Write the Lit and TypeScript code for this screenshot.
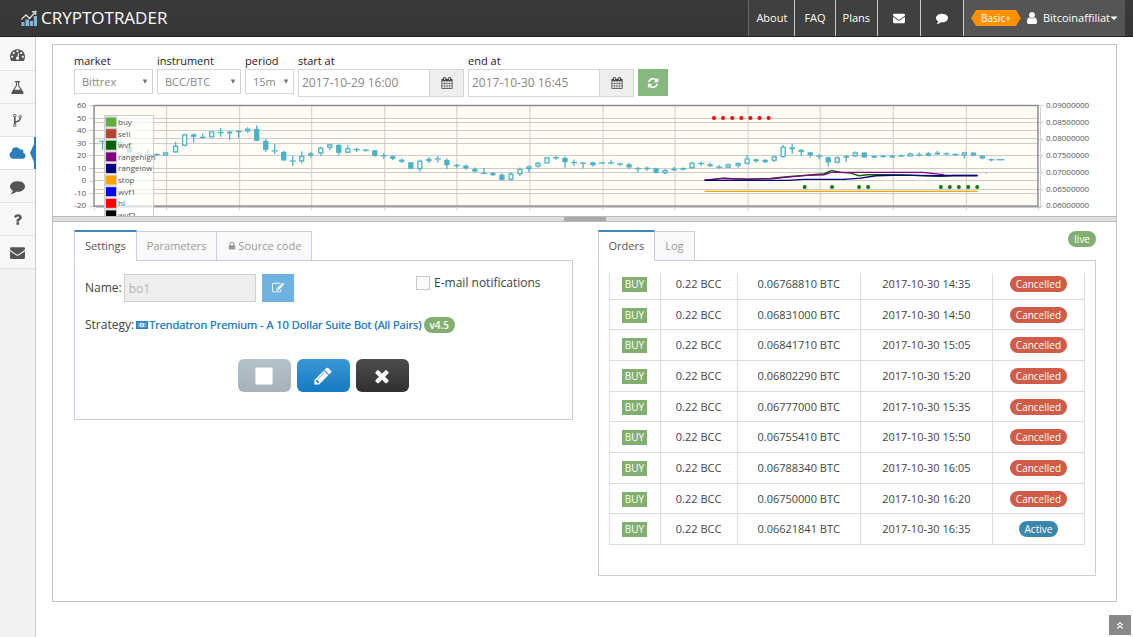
import { LitElement, html, css, svg } from "lit";
import { customElement, property } from "lit/decorators.js";

const GLYPHS: Record<string, string> = {
  envelope: "M1792 710v794q0 66-47 113t-113 47h-1472q-66 0-113-47t-47-113v-794q44 49 101 87 362 246 497 345 57 42 92.500 65.500t94.500 48 110 24.500h2q51 0 110-24.500t94.500-48 92.500-65.500q170-123 498-345 57-39 100-87zm0-294q0 79-49 151t-122 123q-376 261-468 325-10 7-42.500 31t-54 38-52 32.500-57.500 27-50 9h-2q-23 0-50-9t-57.500-27-52-32.500-54-38-42.500-31q-91-64-262-182.500t-205-142.500q-62-42-117-115.500t-55-136.500q0-78 41.500-130t118.500-52h1472q65 0 112.500 47t47.500 113z",
  comment: "M1792 896q0 174-120 321.500t-326 233-450 85.500q-70 0-145-8-198 175-460 242-49 14-114 22-17 2-30.500-9t-17.500-29v-1q-3-4-.5-12t2-10 4.500-9.500l6-9 7-8.500 8-9q7-8 31-34.500t34.500-38 31-39.500 32.500-51 27-59 26-76q-157-89-247.500-220t-90.500-281q0-130 71-248.500t191-204.500 286-136.500 348-50.500q244 0 450 85.500t326 233 120 321.500z",
  cloud: "M1984 1152q0 159-112.500 271.500t-271.500 112.500h-1088q-185 0-316.500-131.500t-131.500-316.500q0-132 71-241.500t187-163.500q-2-28-2-43 0-212 150-362t362-150q158 0 286.500 88t187.500 230q70-62 166-62 106 0 181 75t75 181q0 75-41 138 129 30 213 134.500t84 239.500z",
  dashboard: "M384 1152q0-53-37.500-90.500t-90.500-37.500-90.500 37.500-37.500 90.500 37.500 90.500 90.500 37.500 90.500-37.500 37.500-90.500zm192-448q0-53-37.500-90.500t-90.500-37.500-90.500 37.500-37.500 90.500 37.500 90.500 90.500 37.500 90.500-37.500 37.500-90.500zm428 481l101-382q6-26-7.500-48.500t-38.500-29.500-48 6.500-30 39.500l-101 382q-60 5-107 43.500t-63 98.500q-20 77 20 146t117 89 146-20 89-117q16-60-6-117t-72-91zm660-33q0-53-37.500-90.500t-90.500-37.500-90.500 37.500-37.500 90.500 37.500 90.500 90.500 37.500 90.500-37.500 37.500-90.500zm-640-640q0-53-37.500-90.500t-90.500-37.500-90.500 37.500-37.500 90.500 37.500 90.500 90.500 37.500 90.500-37.500 37.500-90.500zm448 192q0-53-37.500-90.500t-90.500-37.500-90.500 37.500-37.500 90.500 37.500 90.500 90.500 37.500 90.500-37.500 37.500-90.500zm320 448q0 261-141 483-19 29-54 29h-1402q-35 0-54-29-141-221-141-483 0-182 71-348t191-286 286-191 348-71 348 71 286 191 191 286 71 348z",
  flask: "M1591 1448q56 89 21.500 152.500t-140.500 63.500h-1152q-106 0-140.500-63.500t21.500-152.500l503-793v-399h-64q-26 0-45-19t-19-45 19-45 45-19h512q26 0 45 19t19 45-19 45-45 19h-64v399zm-779-725l-272 429h712l-272-429-20-31v-436h-128v436z",
  fork: "M672 1472q0-40-28-68t-68-28-68 28-28 68 28 68 68 28 68-28 28-68zm0-1152q0-40-28-68t-68-28-68 28-28 68 28 68 68 28 68-28 28-68zm640 128q0-40-28-68t-68-28-68 28-28 68 28 68 68 28 68-28 28-68zm96 0q0 52-26 96.500t-70 69.500q-2 287-226 414-67 38-203 81-128 40-169.500 71t-41.500 100v26q44 25 70 69.500t26 96.500q0 80-56 136t-136 56-136-56-56-136q0-52 26-96.500t70-69.500v-820q-44-25-70-69.500t-26-96.500q0-80 56-136t136-56 136 56 56 136q0 52-26 96.500t-70 69.500v497q54-26 154-57 55-17 87.500-29.500t70.500-31 59-39.500 40.500-51 28-69.500 8.500-91.500q-44-25-70-69.500t-26-96.500q0-80 56-136t136-56 136 56 56 136z",
  question: "M1088 1256v240q0 16-12 28t-28 12h-240q-16 0-28-12t-12-28v-240q0-16 12-28t28-12h240q16 0 28 12t12 28zm316-600q0 54-15.500 101t-35 76.500-55 59.500-57.500 43.500-61 35.500q-41 23-68.500 65t-27.500 67q0 17-12 32.500t-28 15.500h-240q-15 0-25.500-18.500t-10.500-37.500v-45q0-83 65-156.500t143-108.500q59-27 84-56t25-76q0-42-46.500-74t-107.500-32q-65 0-108 29-35 25-107 115-13 16-31 16-12 0-25-8l-164-125q-13-10-15.500-25t5.500-28q160-266 464-266 80 0 161 31t146 83 106 127.500 41 158.500z",
  user: "M1536 1399q0 109-62.500 187t-150.500 78h-854q-88 0-150.500-78t-62.500-187q0-85 8.500-160.500t31.500-152 58.500-131 94-89 134.500-34.500q131 128 313 128t313-128q76 0 134.500 34.500t94 89 58.500 131 31.500 152 8.500 160.500zm-256-887q0 159-112.500 271.500t-271.500 112.500-271.500-112.500-112.500-271.500 112.500-271.500 271.500-112.500 271.500 112.500 112.500 271.500z",
  calendar: "M192 1664h288v-288h-288v288zm352 0h320v-288h-320v288zm-352-352h288v-320h-288v320zm352 0h320v-320h-320v320zm-352-384h288v-288h-288v288zm736 736h320v-288h-320v288zm-384-736h320v-288h-320v288zm768 736h288v-288h-288v288zm-384-352h320v-320h-320v320zm-352-864v-288q0-13-9.500-22.500t-22.500-9.500h-64q-13 0-22.500 9.500t-9.500 22.500v288q0 13 9.500 22.500t22.500 9.500h64q13 0 22.500-9.500t9.500-22.500zm736 864h288v-320h-288v320zm-384-384h320v-288h-320v288zm384 0h288v-288h-288v288zm32-480v-288q0-13-9.500-22.500t-22.500-9.500h-64q-13 0-22.500 9.500t-9.500 22.500v288q0 13 9.500 22.500t22.500 9.500h64q13 0 22.500-9.500t9.500-22.500zm384-64v1280q0 52-38 90t-90 38h-1408q-52 0-90-38t-38-90v-1280q0-52 38-90t90-38h128v-96q0-66 47-113t113-47h64q66 0 113 47t47 113v96h384v-96q0-66 47-113t113-47h64q66 0 113 47t47 113v96h128q52 0 90 38t38 90z",
  refresh: "M1639 1056q0 5-1 7-64 268-268 434.500t-478 166.500q-146 0-282.500-55t-243.500-157l-129 129q-19 19-45 19t-45-19-19-45v-448q0-26 19-45t45-19h448q26 0 45 19t19 45-19 45l-137 137q71 66 161 102t187 36q134 0 250-65t186-179q11-17 53-117 8-23 30-23h192q13 0 22.500 9.500t9.500 22.500zm25-800v448q0 26-19 45t-45 19h-448q-26 0-45-19t-19-45 19-45l138-138q-148-137-349-137-134 0-250 65t-186 179q-11 17-53 117-8 23-30 23h-199q-13 0-22.500-9.500t-9.500-22.500v-7q65-268 270-434.500t480-166.500q146 0 284 55.500t245 156.500l130-129q19-19 45-19t45 19 19 45z",
  lock: "M640 768h512v-192q0-106-75-181t-181-75-181 75-75 181v192zm832 96v576q0 40-28 68t-68 28h-960q-40 0-68-28t-28-68v-576q0-40 28-68t68-28h32v-192q0-184 132-316t316-132 316 132 132 316v192h32q40 0 68 28t28 68z",
  edit: "M888 1184l116-116-152-152-116 116v56h96v96h56zm440-720q-16-16-33 1l-350 350q-17 17-1 33t33-1l350-350q17-17 1-33zm80 594v190q0 119-84.500 203.500t-203.500 84.500h-832q-119 0-203.500-84.500t-84.500-203.500v-832q0-119 84.500-203.500t203.500-84.500h832q63 0 117 25 15 7 18 23 3 17-9 29l-49 49q-14 14-32 8-23-6-45-6h-832q-66 0-113 47t-47 113v832q0 66 47 113t113 47h832q66 0 113-47t47-113v-126q0-13 9-22l64-64q15-15 35-7t20 29zm-96-738l288 288-672 672h-288v-288zm444 132l-92 92-288-288 92-92q28-28 68-28t68 28l152 152q28 28 28 68t-28 68z",
  pencil: "M491 1536l91-91-235-235-91 91v107h128v128h107zm523-928q0-22-22-22-10 0-17 7l-542 542q-7 7-7 17 0 22 22 22 10 0 17-7l542-542q7-7 7-17zm-54-192l416 416-832 832h-416v-416zm683 96q0 53-37 90l-166 166-416-416 166-165q36-38 90-38 53 0 91 38l235 234q37 39 37 91z",
  times: "M1490 1322q0 40-28 68l-136 136q-28 28-68 28t-68-28l-294-294-294 294q-28 28-68 28t-68-28l-136-136q-28-28-28-68t28-68l294-294-294-294q-28-28-28-68t28-68l136-136q28-28 68-28t68 28l294 294 294-294q28-28 68-28t68 28l136 136q28 28 28 68t-28 68l-294 294 294 294q28 28 28 68z",
  stop: "M1664 192v1408q0 26-19 45t-45 19h-1408q-26 0-45-19t-19-45v-1408q0-26 19-45t45-19h1408q26 0 45 19t19 45z",
  up: "M330 900l566-560 566 560-150 150-416-416-416 416zM330 1460l566-560 566 560-150 150-416-416-416 416z",
  caret: "M100 560h1592l-796 860z",
  down: "M200 300h1392l-696 1250z",
};

@customElement("glyph-icon")
class GlyphIcon extends LitElement {
  @property() name = "";
  static styles = css`
    :host { display: inline-flex; width: 14px; height: 14px; flex: none; }
    svg { display: block; width: 100%; height: 100%; fill: currentColor; }
  `;
  render() {
    const box = this.name === "cloud" ? "0 0 2048 1792" : "0 0 1792 1792";
    return html`<svg viewBox=${box} aria-hidden="true"><path d=${GLYPHS[this.name] ?? ""}></path></svg>`;
  }
}

/* Each candle: body top, body bottom, high, low, kind (1 filled, 0 hollow), in thirds of a unit. */
type Candle = [number, number, number, number, number];
const CANDLES: Candle[] = [
  [137,140,137,165,1],[150,153,142,160,1],[141,149,133,156,0],[157,172,150,172,1],[175,178,170,182,1],[177,180,163,183,1],
  [177,180,175,182,1],[172,181,170,182,0],[152,172,140,174,0],[118,152,116,154,0],[118,125,115,143,1],[126,128,116,131,1],
  [109,127,109,127,0],[111,114,99,125,1],[110,115,108,135,1],[108,111,105,130,1],[101,109,97,114,0],[102,137,91,139,1],
  [138,164,131,171,1],[166,169,145,177,1],[171,196,167,197,1],[197,199,182,212,1],[183,199,169,205,0],[175,181,170,188,0],
  [158,175,155,182,0],[148,158,146,165,0],[150,173,145,181,1],[160,173,151,173,0],[162,165,158,171,1],[164,167,162,170,1],
  [166,182,165,185,1],[181,184,174,192,1],[184,191,181,195,1],[194,200,190,204,1],[202,221,201,221,1],[197,222,193,229,0],
  [192,198,186,204,1],[190,193,183,202,1],[195,210,190,222,1],[210,213,207,218,1],[212,219,208,224,1],[222,229,217,234,1],
  [234,235,219,237,1],[234,240,231,243,1],[239,254,235,256,1],[236,254,231,257,0],[222,237,217,243,0],[214,222,211,232,0],
  [203,214,200,218,0],[187,205,187,205,0],[187,189,182,194,1],[189,201,185,218,1],[201,204,193,212,1],[203,206,201,220,1],
  [202,210,200,214,1],[203,205,202,206,1],[202,205,194,208,1],[206,208,203,213,1],[208,217,204,222,1],[219,222,216,232,1],
  [218,222,214,227,1],[220,233,218,235,1],[225,234,222,238,0],[221,225,216,228,1],[219,223,217,226,1],[203,219,200,221,0],
  [204,207,200,212,1],[208,213,203,216,1],[215,218,210,221,1],[208,218,205,220,0],[204,212,202,218,0],[190,206,180,208,0],
  [193,198,190,203,1],[195,201,192,204,1],[184,197,181,201,0],[155,186,150,187,0],[157,162,146,176,1],[165,170,162,182,1],
  [172,181,170,187,1],[182,185,177,193,1],[187,202,184,214,1],[187,203,184,205,0],[183,187,180,200,1],[172,184,169,186,0],
  [173,187,171,189,1],[183,187,181,189,1],[183,185,180,188,1],[182,187,179,189,1],[182,184,178,186,1],[175,184,172,186,0],
  [178,181,172,184,1],[175,182,170,184,0],[173,178,168,180,1],[175,177,172,182,1],[177,180,175,183,1],[172,181,170,190,0],
  [173,181,170,184,1],[182,190,180,193,1],[193,195,190,199,1],[193,195,193,195,1],
];
const SERIES = [
  ["orange", "12,289 830,289"],
  ["#006400", "12,255 68,249 95,251 140,252 210,250 260,245 320,240 370,236 393,226 420,232 450,234 475,242 500,239 560,239 640,241 720,244 760,241 830,241"],
  ["purple", "12,255 40,253 68,250 140,252 210,251 260,246 320,241 370,239 393,231 430,232 665,232 720,238 735,241 830,241"],
  ["navy", "12,256 260,256 310,253 430,253 480,249 525,242 600,240 700,242 830,242"],
];
const LEGEND = [["buy","#62ac45"],["sell","#b64435"],["wvf","#006400"],["rangehigh","purple"],["rangelow","navy"],["stop","orange"],["wvf1","blue"],["hi","red"],["wvf2","black"]];

@customElement("price-chart")
class PriceChart extends LitElement {
  static styles = css`
    :host { display: block; }
    svg { display: block; width: 100%; height: auto; }
    text { font-family: "Open Sans", sans-serif; font-size: 8px; fill: #545454; }
    .grid { stroke: #ccc; stroke-width: 1; }
    .candle { stroke: #4bb2c5; stroke-width: 1.3; }
  `;
  render() {
    const gx = [166, 239, 311, 384, 456, 529, 602, 674, 747, 819, 892, 965];
    const left = [60, 50, 40, 30, 20, 10, 0, -10, -20];
    const right = ["0.09000000", "0.08500000", "0.08000000", "0.07500000", "0.07000000", "0.06500000", "0.06000000"];
    return html`<svg viewBox="53 98 1062 118" role="img" aria-label="BCC/BTC price chart">
      <rect x="94" y="105" width="943" height="101" fill="#fffdf6"></rect>
      ${left.slice(1, -1).map((_, i) => svg`<line class="grid" x1="94" x2="1037" y1=${Math.round(117.5 + i * 12.55) + 0.5} y2=${Math.round(117.5 + i * 12.55) + 0.5}></line>`)}
      ${right.slice(1, -1).map((_, i) => svg`<line class="grid" x1="94" x2="1037" y1=${Math.round(121.700 + i * 16.75) + 0.5} y2=${Math.round(121.700 + i * 16.75) + 0.5}></line>`)}
      ${gx.map((x) => svg`<line class="grid" x1=${x + 0.5} x2=${x + 0.5} y1="106" y2="210"></line>`)}
      ${left.map((v, i) => svg`<line class="grid" x1="89" x2="94" y1=${Math.round(105 + i * 12.6) + 0.5} y2=${Math.round(105 + i * 12.6) + 0.5}></line>
        <text x="86" y=${108 + i * 12.5} text-anchor="end">${v}</text>`)}
      ${right.map((v, i) => svg`<line class="grid" x1="1037" x2="1042" y1=${Math.round(105 + i * 16.75) + 0.5} y2=${Math.round(105 + i * 16.75) + 0.5}></line>
        <text x="1045" y=${108 + i * 16.7}>${v}</text>`)}
      <path d="M1039.500 107V207.500H96M94.500 206V210M1037.500 206V210" fill="none" stroke="#ccc"></path>
      <rect x="94" y="105.500" width="943" height="100.500" fill="none" stroke="#8c8c8c" stroke-width="1.500"></rect>
      ${CANDLES.map(([t, b, h, l, f], i) => {
        const x = Math.round(102 + i * 9.065) + 0.5;
        const y = 95 + t / 3;
        const bh = (b - t) / 3;
        const w = i === CANDLES.length - 1 ? 8 : 6;
        const slim = bh < 1.2;
        return svg`<g class="candle">
          <line x1=${x} x2=${x} y1=${95 + h / 3} y2=${y}></line>
          <line x1=${x} x2=${x} y1=${y + bh} y2=${95 + l / 3}></line>
          ${slim
            ? svg`<line x1=${x - w / 2} x2=${x + w / 2} y1=${y + bh / 2} y2=${y + bh / 2}></line>`
            : svg`<rect x=${x - 2} y=${y + 0.5} width="4" height=${Math.max(bh - 1, 0.5)} fill=${f ? "#4bb2c5" : "#fffdf6"}></rect>`}
        </g>`;
      })}
      <g transform="translate(700 95) scale(0.333333)">
        ${SERIES.map(([c, pts]) => svg`<polyline points=${pts} fill="none" stroke=${c} stroke-width="4"></polyline>`)}
        ${[0, 1, 2, 3, 4, 5, 6].map((i) => svg`<circle cx=${40 + i * 27.3} cy="69" r="6" fill="red"></circle>`)}
        ${[312, 394, 475, 502, 720, 747, 774, 802, 829].map((x) => svg`<circle cx=${x} cy="276" r="6" fill="#0a7a0a"></circle>`)}
        <circle cx="856" cy="234" r="2" fill="#8a8ae0"></circle>
      </g>
      <rect x="104.500" y="115.500" width="49" height="110" fill="#fff" fill-opacity="0.700" stroke="#ccc"></rect>
      ${LEGEND.map(([name, color], i) => svg`<rect x="105.500" y=${117 + i * 11.6} width="11" height="10" fill="#fff" stroke="#ccc"></rect>
        <rect x="106" y=${117.500 + i * 11.6} width="10" height="9" fill=${color}></rect>
        <text x="118" y=${125 + i * 11.6}>${name}</text>`)}
    </svg>`;
  }
}

const ORDERS = [
  ["0.06768810", "14:35"], ["0.06831000", "14:50"], ["0.06841710", "15:05"],
  ["0.06802290", "15:20"], ["0.06777000", "15:35"], ["0.06755410", "15:50"],
  ["0.06788340", "16:05"], ["0.06750000", "16:20"], ["0.06621841", "16:35"],
];
const SIDE = [["dashboard", "Dashboard"], ["flask", "Backtests"], ["fork", "Strategies"], ["cloud", "Live trading"], ["comment", "Chat"], ["question", "Help"], ["envelope", "Contact"]];

@customElement("app-root")
class AppRoot extends LitElement {
  static styles = css`
    :host { display: flex; flex-direction: column; min-height: 100vh; background: #fff; color: #444; font: 12px/16px "Open Sans", sans-serif; }
    * { box-sizing: border-box; }
    a { color: inherit; text-decoration: none; }
    button, input, select { font: inherit; color: inherit; margin: 0; border-radius: 0; }
    button { padding: 0; border: 0; background: none; }

    header { display: flex; height: 37px; padding-right: 8px; background: linear-gradient(#3a3a3a, #363636); border-bottom: 1px solid #222; color: #fff; }
    .brand { display: flex; align-items: center; gap: 4px; padding-left: 21px; margin-right: auto; font-size: 17px; }
    .brand svg { width: 16px; height: 16px; }
    nav.top { display: flex; font-size: 11px; }
    nav.top a, .account { display: flex; align-items: center; border-left: 1px solid #ccc; background: #404040; padding: 0 7px; }
    nav.top a:first-child { border-left-color: #666; }
    nav.top a.pad { padding: 0 9px; }
    nav.top a.icon { padding: 0 15px; }
    nav.top glyph-icon { width: 12px; height: 12px; }
    .account { background: #555; color: #fff; gap: 4px; padding: 0 7px; font-size: 11px; }
    .plan { padding: 0 10px; line-height: 16px; font-size: 10px; background: #ff9000; clip-path: polygon(5px 0, calc(100% - 5px) 0, 100% 50%, calc(100% - 5px) 100%, 5px 100%, 0 50%); }
    .account .who { display: flex; align-items: center; }
    .account .who glyph-icon { width: 8px; height: 8px; }

    .body { display: flex; flex: 1; }
    .side { width: 36px; padding-top: 1px; background: #f2f2f2; border-right: 1px solid #ccc; }
    .side a { position: relative; display: flex; align-items: center; justify-content: center; height: 33px; background: #f8f8f8; border-bottom: 1px solid #e2e2e2; color: #555; }
    .side a glyph-icon { width: 15px; height: 15px; }
    .side a.on { background: #fff; color: #2b7dbc; }
    .side a.on glyph-icon { width: 17px; height: 15px; }
    .side a.on::after { content: ""; position: absolute; right: -1px; top: 0; bottom: 0; width: 6px; background: #2b7dbc; clip-path: polygon(0 50%, 4px 22%, 4px 0, 100% 0, 100% 100%, 4px 100%, 4px 78%); }

    main { flex: 1; min-width: 0; padding: 7px 17px 35px 16px; }
    .frame { border: 1px solid #c4c4c4; margin-right: -1px; }
    .filters { display: flex; gap: 4px; padding: 8px 21px 0; align-items: flex-start; height: 53px; }
    .field { display: flex; flex-direction: column; color: #222; }
    .field label { line-height: 16px; font-size: 11px; }
    .pick { display: grid; color: #777; }
    .pick select, .pick glyph-icon { grid-area: 1 / 1; }
    .pick select { appearance: none; height: 25px; border: 1px solid #d5d5d5; background: #fff; padding: 0 7px; font-size: 11px; color: #888; }
    .pick glyph-icon { width: 6px; height: 7px; align-self: center; justify-self: end; margin-right: 5px; pointer-events: none; }
    .w-market { width: 79px; } .w-instrument { width: 84px; } .w-period { width: 49px; }
    .date { display: flex; height: 28px; }
    .date input { width: 132px; border: 1px solid #d5d5d5; padding: 0 3px; color: #888; background: #fff; }
    .date button { width: 34px; display: grid; place-items: center; background: #eee; border: 1px solid #d5d5d5; border-left: 0; color: #444; }
    .refresh { width: 30px; height: 27px; margin-top: 16px; display: grid; place-items: center; background: #87b87f; color: #fff; }
    .refresh glyph-icon, .date glyph-icon { width: 12px; height: 12px; }
    .split { display: flex; justify-content: center; height: 6px; background: #ddd; border-top: 1px solid #bbb; border-bottom: 1px solid #bbb; }
    .split span { width: 42px; background: #aaa; }

    .lower { display: grid; grid-template-columns: 1fr 1fr; gap: 25px; align-items: start; padding: 8px 20px 25px 21px; }
    .tabs { display: flex; align-items: flex-end; margin-bottom: -1px; position: relative; font-size: 11px; color: #999; }
    .tabs button { display: flex; align-items: center; gap: 1px; height: 30px; padding: 0 10px; background: #f9f9f9; border: 1px solid #c5d0dc; border-left: 0; color: #999; }
    .tabs button.on { height: 31px; background: #fff; color: #555; border-left: 1px solid #c5d0dc; border-top: 2px solid #4185b9; border-bottom-color: #fff; }
    .tabs glyph-icon { width: 10px; height: 10px; }
    .live { align-self: flex-start; margin: 1px 0 0 auto; height: 16px; }
    .box { border: 1px solid #c5d0dc; padding: 12px 10px; }

    .settings { height: 160px; }
    .row { display: flex; align-items: center; }
    .name { gap: 2px; height: 30px; }
    .name input[type="text"] { width: 132px; height: 28px; border: 1px solid #d0d0d0; background: #eee; color: #b5b5b5; padding: 0 4px; }
    .name .edit { width: 32px; height: 28px; display: grid; place-items: center; margin-left: 4px; background: #6fb3e0; color: #fff; }
    .edit glyph-icon { width: 12px; height: 12px; }
    .mail { display: flex; align-items: center; gap: 4px; margin: 0 21px 10px auto; }
    .mail input { appearance: none; width: 14px; height: 14px; border: 1px solid #c8c8c8; background: #fafafa; }
    .strategy { gap: 2px; margin-top: 14px; }
    .strategy a { display: flex; align-items: center; gap: 1px; color: #2a7fc4; font-size: 11px; white-space: nowrap; text-shadow: 0 0 0 #2a7fc4; }
    .strategy svg { width: 12px; height: 8px; }
    .actions { display: flex; justify-content: center; gap: 6px; margin-top: 26px; }
    .actions button { width: 53px; height: 33px; border-radius: 6px; display: grid; place-items: center; color: #fff; background: linear-gradient(#b4c2cc, #a6b1b9); }
    .actions button.blue { background: linear-gradient(#3b98d6, #157abf); }
    .actions button.dark { background: linear-gradient(#4d4d4d, #303030); }
    .actions glyph-icon { width: 20px; height: 20px; }

    .orders { height: 316px; }
    .scroll { height: 272px; display: flex; flex-direction: column; justify-content: flex-end; overflow: hidden; }
    table { width: 100%; height: 277px; flex: none; table-layout: fixed; border-collapse: collapse; font-size: 11px; text-align: center; }
    td { border: 1px solid #ddd; padding: 0; }
    .c1 { width: 51px; } .c2 { width: 77px; } .c3 { width: 123px; } .c4 { width: 132px; } .c5 { width: 92px; }
    .pill { display: inline-block; line-height: 16px; padding: 0 6px; border-radius: 8px; background: #82af6f; color: #fff; font-size: 10px; }
    .pill.square { border-radius: 0; padding: 0 3px; line-height: 15px; }
    .pill.red { background: #d15b47; }
    .pill.sky { background: #3a87ad; }
    .pill.bold { font-weight: 600; }

    .totop { position: fixed; right: 2px; bottom: 2px; width: 22px; height: 20px; display: grid; place-items: center; background: #888; color: #fff; }
    .totop glyph-icon { width: 10px; height: 10px; }
  `;

  render() {
    return html`
      <header>
        <a class="brand" href="#">
          <svg viewBox="0 0 16 16" aria-hidden="true">
            <path d="M0.500 12h3v4h-3zM4.500 9.500H8V16H4.500zM8.800 11H12v5H8.800zM12.800 6H16v10h-3.200z" fill="#7db8dc"></path>
            <path d="M0 9.500L5 5l3.500 3.500 5.500-6M11 2l3.800-.8L14.500 5" fill="none" stroke="#ddd" stroke-width="1.300"></path>
          </svg>
          <span>CRYPTOTRADER</span>
        </a>
        <nav class="top">
          <a href="#">About</a><a href="#" class="pad">FAQ</a><a href="#">Plans</a>
          <a href="#" class="icon" aria-label="Messages"><glyph-icon name="envelope"></glyph-icon></a>
          <a href="#" class="icon" aria-label="Chat"><glyph-icon name="comment"></glyph-icon></a>
        </nav>
        <button class="account">
          <span class="plan">Basic+</span><glyph-icon name="user"></glyph-icon>
          <span class="who">Bitcoinaffiliat<glyph-icon name="caret"></glyph-icon></span>
        </button>
      </header>
      <div class="body">
        <nav class="side">
          ${SIDE.map(([icon, label]) => html`<a href="#" aria-label=${label} class=${icon === "cloud" ? "on" : ""}><glyph-icon name=${icon}></glyph-icon></a>`)}
        </nav>
        <main>
          <div class="frame">
            <div class="filters">
              ${[["market", "Bittrex"], ["instrument", "BCC/BTC"], ["period", "15m"]].map(([id, v]) => html`
                <div class="field">
                  <label for=${id}>${id}</label>
                  <div class="pick w-${id}"><select id=${id}><option>${v}</option></select><glyph-icon name="down"></glyph-icon></div>
                </div>`)}
              ${[["start", "2017-10-29 16:00"], ["end", "2017-10-30 16:45"]].map(([id, v]) => html`
                <div class="field">
                  <label for=${id}>${id} at</label>
                  <div class="date"><input id=${id} type="text" .value=${v}><button aria-label="Pick ${id} date"><glyph-icon name="calendar"></glyph-icon></button></div>
                </div>`)}
              <button class="refresh" aria-label="Refresh"><glyph-icon name="refresh"></glyph-icon></button>
            </div>
            <price-chart></price-chart>
            <div class="split"><span></span></div>
            <div class="lower">
              <section>
                <div class="tabs">
                  <button class="on">Settings</button><button>Parameters</button>
                  <button><glyph-icon name="lock"></glyph-icon>Source code</button>
                </div>
                <div class="box settings">
                  <div class="row name">
                    <label for="name">Name:</label>
                    <input id="name" type="text" .value=${"bo1"} disabled>
                    <button class="edit" aria-label="Rename"><glyph-icon name="edit"></glyph-icon></button>
                    <label class="mail"><input type="checkbox">E-mail notifications</label>
                  </div>
                  <div class="row strategy">
                    <span>Strategy:</span>
                    <a href="#">
                      <svg viewBox="0 0 12 8" aria-hidden="true"><rect width="12" height="8" fill="#2a7fc4"></rect><rect x="1.500" y="1.500" width="9" height="5" fill="#6ba6d8"></rect><circle cx="6" cy="4" r="2.300" fill="#e6f0f8"></circle><path d="M6 2.700v2.600" stroke="#2a7fc4"></path></svg>
                      Trendatron Premium - A 10 Dollar Suite Bot (All Pairs)</a>
                    <span class="pill bold">v4.5</span>
                  </div>
                  <div class="actions">
                    <button aria-label="Stop"><glyph-icon name="stop"></glyph-icon></button>
                    <button class="blue" aria-label="Edit"><glyph-icon name="pencil"></glyph-icon></button>
                    <button class="dark" aria-label="Delete"><glyph-icon name="times"></glyph-icon></button>
                  </div>
                </div>
              </section>
              <section>
                <div class="tabs">
                  <button class="on">Orders</button><button>Log</button>
                  <span class="pill live">live</span>
                </div>
                <div class="box orders">
                  <div class="scroll">
                    <table>
                      <colgroup><col class="c1"><col class="c2"><col class="c3"><col class="c4"><col class="c5"></colgroup>
                      <tbody>
                        ${ORDERS.map(([price, time], i) => html`<tr>
                          <td><span class="pill square">BUY</span></td>
                          <td>0.22 BCC</td><td>${price} BTC</td><td>2017-10-30 ${time}</td>
                          <td><span class="pill ${i === 8 ? "sky" : "red"}">${i === 8 ? "Active" : "Cancelled"}</span></td>
                        </tr>`)}
                      </tbody>
                    </table>
                  </div>
                </div>
              </section>
            </div>
          </div>
        </main>
      </div>
      <button class="totop" aria-label="Back to top"><glyph-icon name="up"></glyph-icon></button>
    `;
  }
}
